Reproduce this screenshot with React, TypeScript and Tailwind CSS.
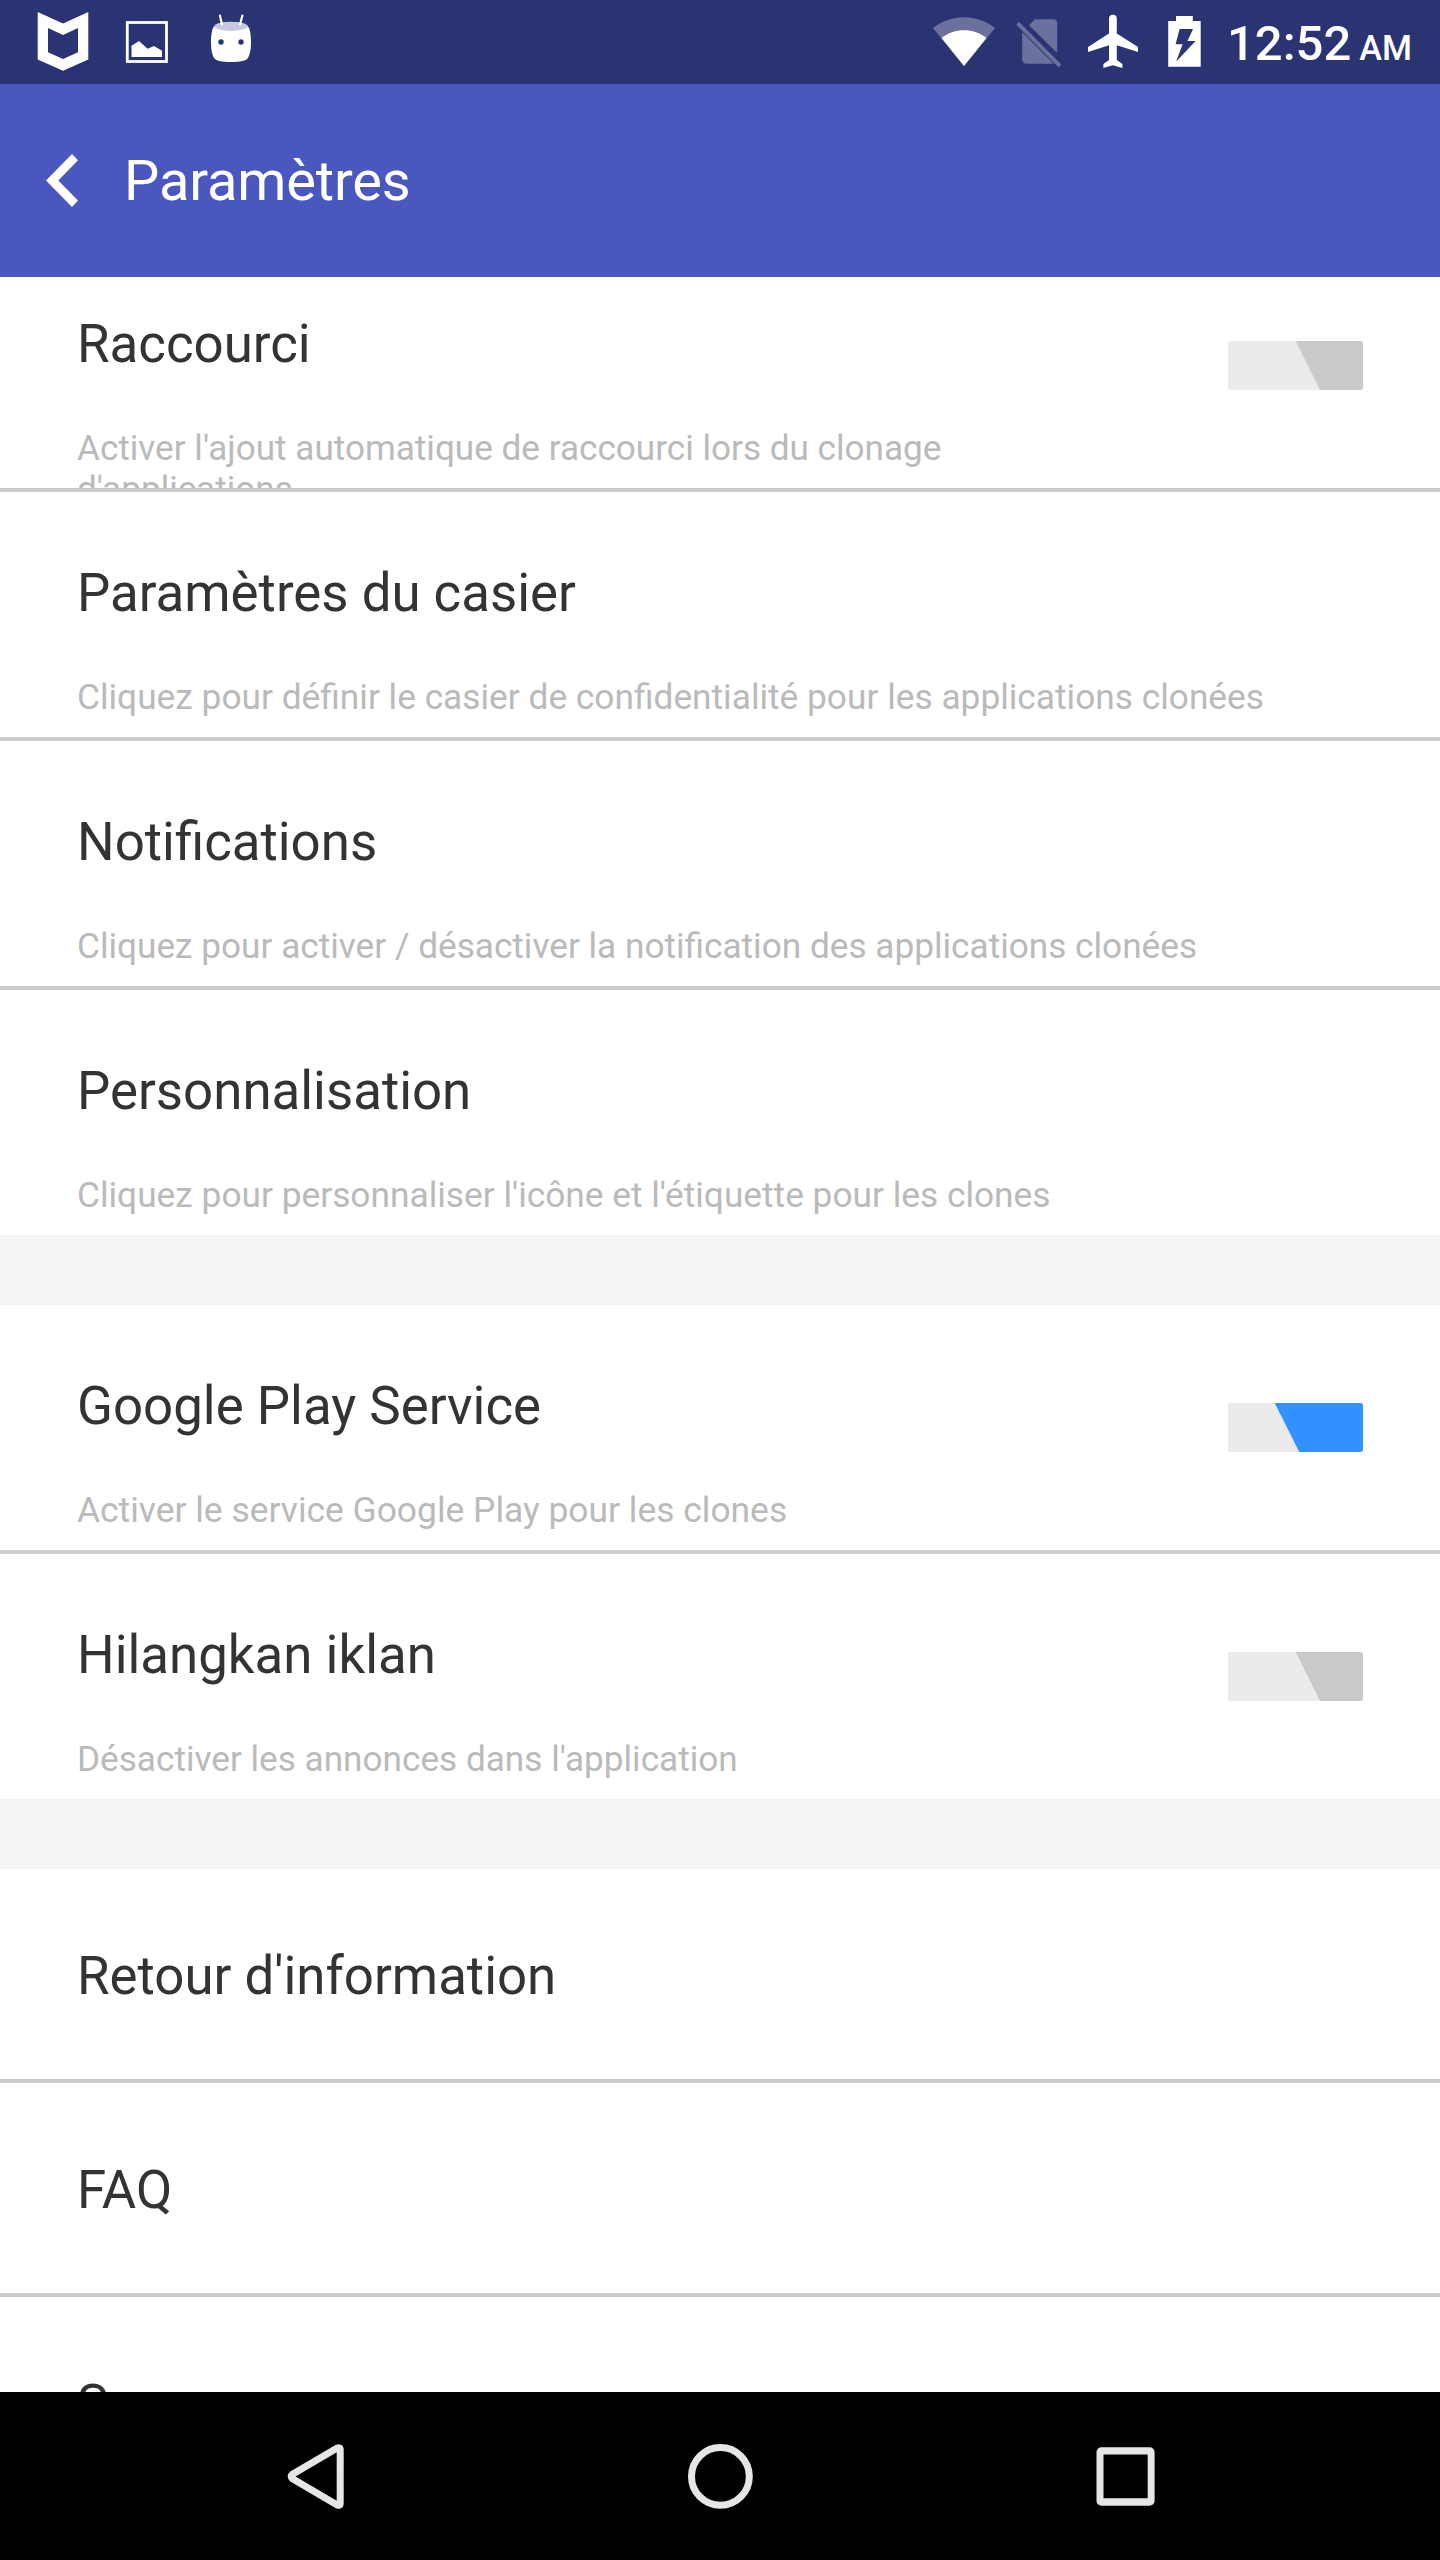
import React from "react";

function Shield() {
  return (
    <svg className="h-[84px] w-[54px]" viewBox="36 0 54 84" fill="#fff" fillRule="evenodd">
      <path d="M37.7 12 63 23.6 88.3 12V59.5L63 70.8 37.7 59.5ZM48 28V52.3L63 59 78 52.3V28L63 35Z" />
    </svg>
  );
}

function Picture() {
  return (
    <svg className="h-[84px] w-[44px]" viewBox="125 0 44 84">
      <rect x="127.3" y="22.5" width="39.2" height="39" fill="none" stroke="#fff" strokeWidth="2.8" />
      <path d="M131.5 45.7 139 41l8.5 7.8 6.5-2.8 8 4.8V57H131.5Z" fill="#fff" />
    </svg>
  );
}

function Robot() {
  return (
    <svg className="h-[84px] w-[42px]" viewBox="210 0 42 84">
      <path
        d="M214.5 26C211.8 28 211 36 211 42 211 49 212 54.5 213.8 57.5 215.5 61 222 62 231 62S246.5 61 248.2 57.5C250 54.5 251 49 251 42 251 36 250.2 28 247.5 26Z"
        fill="#fff"
      />
      <ellipse cx="231" cy="26.3" rx="16.7" ry="4.6" fill="#c7c9dd" />
      <path d="M219.9 15.5 222 24.5M242.4 15.5 240 24.5" stroke="#fff" strokeWidth="2.2" strokeLinecap="round" />
      <circle cx="221" cy="42" r="2.7" fill="#2b3472" />
      <circle cx="241" cy="42" r="2.7" fill="#2b3472" />
    </svg>
  );
}

function Wifi() {
  return (
    <svg className="h-[84px] w-[64px] shrink-0" viewBox="932 0 64 84" fill="#fff">
      <path d="M964 66 933 28C951 13.5 977 13.5 995 28Z" opacity="0.3" />
      <path d="M964 66 941.5 38C954 27.5 974 27.5 986.5 38Z" />
    </svg>
  );
}

function NoSim() {
  return (
    <svg className="ml-5 h-[84px] w-[46px] shrink-0" viewBox="1016 0 46 84" fill="#fff" opacity="0.3">
      <path d="M1016.3 24.8 1018.8 21.8 1061.3 64.5 1058.8 67.5Z" />
      <path d="M1029 25.2 1035 19.3H1053.2A4 4 0 0 1 1057.2 23.3V53Z" />
      <path d="M1022.2 32 1053.8 63.8H1026.4A4.2 4.2 0 0 1 1022.2 59.6Z" />
    </svg>
  );
}

function Plane() {
  return (
    <svg className="ml-[25px] h-[84px] w-[52px] shrink-0" viewBox="1087 0 52 84" fill="#fff">
      <path d="M1109 18.7a3.9 3.9 0 0 1 7.8 0V33.5L1138 47V52L1116.8 45.2V60L1122.4 64V68L1112.9 65.2 1103.4 68V64L1109 60V45.2L1088 52V47L1109 33.5Z" />
    </svg>
  );
}

function Battery() {
  return (
    <svg className="ml-7 h-[84px] w-[35px] shrink-0" viewBox="1167 0 35 84" fill="#fff" fillRule="evenodd">
      <path d="M1168.2 21H1176V16H1192.8V21H1200.7V66.7H1168.2ZM1179.6 29 1175.6 44.3H1182.6L1176.2 61.5 1195.6 41H1187.5L1193 29Z" />
    </svg>
  );
}

function StatusBar() {
  return (
    <div className="flex h-[84px] shrink-0 items-start justify-between bg-[#2b3472] pl-9">
      <div className="flex">
        <Shield />
        <div className="ml-[35px]">
          <Picture />
        </div>
        <div className="ml-[41px]">
          <Robot />
        </div>
      </div>
      <div className="flex w-[508px]">
        <Wifi />
        <NoSim />
        <Plane />
        <Battery />
        <div className="ml-[25px] flex shrink-0 items-baseline pt-[15px] font-medium leading-[58px] text-white">
          <span className="text-[49px]">12:52</span>
          <span className="ml-[8px] text-[34.3px]">AM</span>
        </div>
      </div>
    </div>
  );
}

function Switch({ on }: { on: boolean }) {
  return (
    <svg className="h-[49px] w-[135px] shrink-0 rounded-[3px]" viewBox="0 0 135 49">
      <rect width="135" height="49" fill="#ebebeb" />
      {on ? (
        <path d="M46.7 0H135V49H71.3Z" fill="#3391ff" />
      ) : (
        <path d="M67.7 0H135V49H92Z" fill="#cacaca" />
      )}
    </svg>
  );
}

interface RowProps {
  title: string;
  text?: string;
  size?: string;
  on?: boolean;
  line?: boolean;
}

function Row({ title, text, size = "", on, line }: RowProps) {
  const border = line ? "border-b-4 border-[#cbcbcb]" : "";
  if (!text) {
    return (
      <div className={`box-content flex h-[210px] shrink-0 items-center bg-white px-[77px] ${border}`}>
        <span className="pt-[3px] text-[52.8px] leading-[62px] text-[#333]">{title}</span>
      </div>
    );
  }
  return (
    <div className={`box-content flex h-[245px] shrink-0 items-center overflow-hidden bg-white ${border}`}>
      <div className="h-[245px] flex-1 pl-[77px] pt-[70px]">
        <div className="text-[52.8px] leading-[62px] text-[#333]">{title}</div>
        <div className={`mt-[53px] leading-[41px] text-[#bababa] ${size} ${on === undefined ? "" : "w-[960px]"}`}>
          {text}
        </div>
      </div>
      <div className="pr-[77px]">{on !== undefined && <Switch on={on} />}</div>
    </div>
  );
}

function Gap() {
  return <div className="h-[70px] shrink-0 bg-[#f5f5f5]" />;
}

function NavBar() {
  return (
    <div className="flex h-[168px] shrink-0 items-center bg-black pl-[284px]">
      <svg className="h-[168px] w-[64px]" viewBox="284 2392 64 168" fill="none" stroke="#e6e6e6" strokeWidth="7">
        <path
          d="M340.2 2449.5Q340.2 2446.8 337.2 2448L292.5 2474.3Q289.8 2476.5 292.5 2478.7L337.2 2505Q340.2 2506.2 340.2 2503.5Z"
          strokeLinejoin="round"
        />
      </svg>
      <svg className="ml-[336px] h-[168px] w-[72px]" viewBox="684 2392 72 168" fill="none" stroke="#e6e6e6" strokeWidth="7">
        <circle cx="720.4" cy="2476.4" r="28.9" />
      </svg>
      <svg className="ml-[336px] h-[168px] w-[68px]" viewBox="1092 2392 68 168" fill="#e6e6e6" fillRule="evenodd">
        <path d="M1101.5 2447.3H1149.6A5 5 0 0 1 1154.6 2452.3V2500.7A5 5 0 0 1 1149.6 2505.7H1101.5A5 5 0 0 1 1096.5 2500.7V2452.3A5 5 0 0 1 1101.5 2447.3ZM1103.5 2454.5V2498.3H1147.7V2454.5Z" />
      </svg>
    </div>
  );
}

export default function App() {
  return (
    <div className="flex h-[2560px] w-[1440px] flex-col overflow-hidden bg-white font-['Roboto',sans-serif]">
      <StatusBar />
      <header className="flex h-[193px] shrink-0 items-center bg-[#4a57bf] pl-[45px]">
        <svg className="mb-px h-[56px] w-[34px]" viewBox="0 0 34 56" fill="#fff">
          <path d="M1 28.5 27 2 33 8.3 13.3 28.5 33 48.5 27 55Z" />
        </svg>
        <h1 className="ml-[45px] text-[56px] leading-[66px] tracking-[-0.15px] text-white">Paramètres</h1>
      </header>
      <main className="flex min-h-0 flex-1 flex-col overflow-hidden">
        <div className="-mt-[34px] flex flex-col">
          <Row
            title="Raccourci"
            text="Activer l'ajout automatique de raccourci lors du clonage d'applications"
            size="text-[35.13px]"
            on={false}
            line
          />
          <Row
            title="Paramètres du casier"
            text="Cliquez pour définir le casier de confidentialité pour les applications clonées"
            size="text-[35.29px]"
            line
          />
          <Row
            title="Notifications"
            text="Cliquez pour activer / désactiver la notification des applications clonées"
            size="text-[35.2px]"
            line
          />
          <Row
            title="Personnalisation"
            text="Cliquez pour personnaliser l'icône et l'étiquette pour les clones"
            size="text-[35.29px]"
          />
          <Gap />
          <Row
            title="Google Play Service"
            text="Activer le service Google Play pour les clones"
            size="text-[35.4px]"
            on
            line
          />
          <Row
            title="Hilangkan iklan"
            text="Désactiver les annonces dans l'application"
            size="text-[35.17px]"
            on={false}
          />
          <Gap />
          <Row title="Retour d'information" line />
          <Row title="FAQ" line />
          <Row title="S" />
        </div>
      </main>
      <NavBar />
    </div>
  );
}
